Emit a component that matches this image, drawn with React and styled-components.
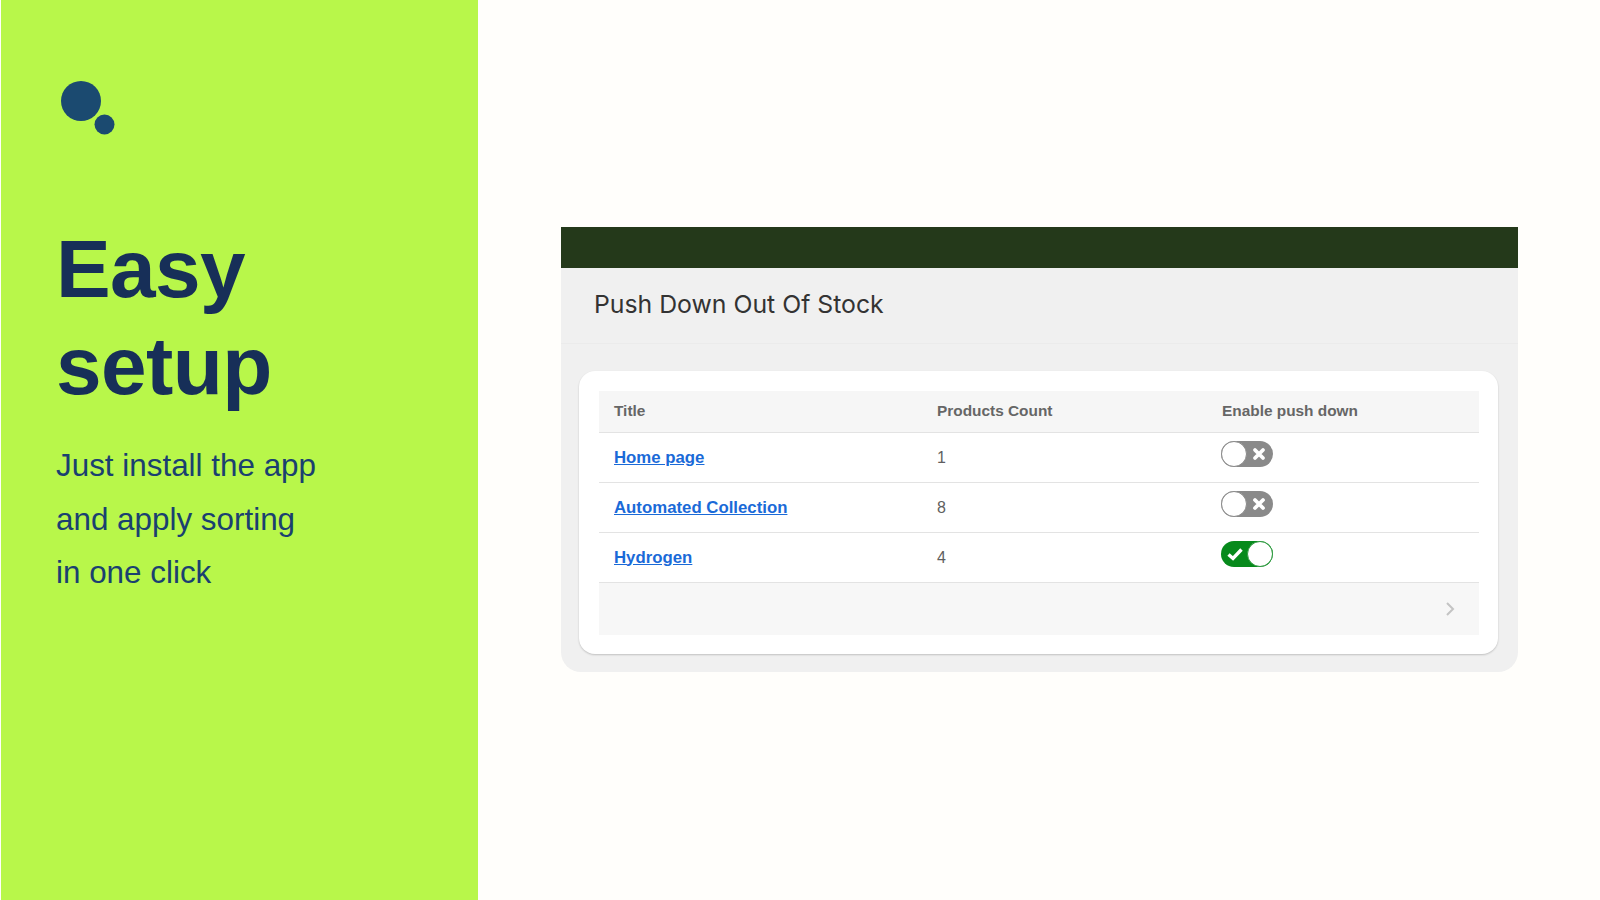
import React from "react";
import styled, { createGlobalStyle } from "styled-components";

const GlobalStyle = createGlobalStyle`
  html, body {
    margin: 0;
    padding: 0;
    background: #fffefb;
    font-family: "Liberation Sans", Arial, sans-serif;
  }
`;

const Page = styled.div`
  display: flex;
  width: 1600px;
  height: 900px;
  overflow: hidden;
  padding-left: 1px;
  box-sizing: border-box;
`;

const Sidebar = styled.aside`
  width: 477px;
  flex: none;
  background: #b8f74a;
  padding: 81px 0 0 55px;
  box-sizing: border-box;
`;

const Logo = styled.svg`
  display: block;
  width: 56px;
  height: 56px;
  margin-left: 4px;
`;

const Heading = styled.h1`
  margin: 83px 0 0;
  font-size: 82px;
  line-height: 97px;
  font-weight: 700;
  letter-spacing: -0.6px;
  color: #172f58;
`;

const Tagline = styled.p`
  margin: 25px 0 0;
  font-size: 31.4px;
  line-height: 53.5px;
  color: #1a4070;
`;

const Main = styled.main`
  flex: 1;
  padding: 227px 0 0 83px;
`;

const Panel = styled.section`
  width: 957px;
  height: 445px;
  background: #f0f0f0;
  border-radius: 0 0 20px 20px;
  overflow: hidden;
`;

const TopBar = styled.div`
  height: 41px;
  background: #24391a;
`;

const PanelHeader = styled.header`
  height: 76px;
  padding-left: 33px;
  display: flex;
  align-items: center;
  border-bottom: 1px solid #ebebeb;
  box-sizing: border-box;
`;

const PanelTitle = styled.h2`
  margin: 0 0 4px;
  font-family: Inter, sans-serif;
  font-size: 24.8px;
  font-weight: 400;
  color: #333;
`;

const Card = styled.div`
  margin: 27px 20px 0 18px;
  height: 283px;
  padding: 20px 19px 0 20px;
  box-sizing: border-box;
  background: #fff;
  border-radius: 16px;
  box-shadow: 0 1px 2px rgba(0, 0, 0, 0.2);
`;

const Row = styled.div`
  display: grid;
  grid-template-columns: 323px 285px 1fr;
  align-items: center;
  height: ${(p) => (p.$head ? "42px" : "50px")};
  padding-left: 15px;
  box-sizing: border-box;
  border-bottom: 1px solid #e3e3e3;
  background: ${(p) => (p.$head ? "#f6f6f6" : "#fff")};
  font-size: 16px;
  color: #5f5f5f;
`;

const HeadCell = styled.span`
  font-size: 15.4px;
  font-weight: 700;
  color: #666;
  margin-bottom: 1px;
`;

const TitleLink = styled.a`
  font-size: 16.8px;
  font-weight: 700;
  color: #1a6ad8;
  text-decoration: underline;
  cursor: pointer;
`;

const Toggle = styled.span`
  width: 52px;
  height: 26px;
  margin: 0 0 8px -1px;
  border-radius: 13px;
  background: ${(p) => (p.$on ? "#078a1c" : "#8a8a8a")};
  display: flex;
  align-items: center;
  justify-content: ${(p) => (p.$on ? "flex-start" : "flex-end")};
  position: relative;
  padding: 0 7px 0 5px;
  box-sizing: border-box;
`;

const Thumb = styled.span`
  position: absolute;
  top: 0;
  ${(p) => (p.$on ? "right: 0;" : "left: 0;")}
  width: 26px;
  height: 26px;
  box-sizing: border-box;
  border-radius: 50%;
  background: #fff;
  border: 1.5px solid ${(p) => (p.$on ? "#2f9a40" : "#8a8a8a")};
`;

const Footer = styled.div`
  height: 52px;
  background: #f7f7f7;
  display: flex;
  align-items: center;
  justify-content: flex-end;
  padding-right: 23px;
`;

const rows = [
  { title: "Home page", count: 1, on: false },
  { title: "Automated Collection", count: 8, on: false },
  { title: "Hydrogen", count: 4, on: true },
];

const App = () => {
  return (
    <Page>
      <GlobalStyle />
      <Sidebar>
        <Logo viewBox="0 0 56 56">
          <circle cx="21" cy="20" r="20" fill="#1b4a70" />
          <circle cx="44.5" cy="43.5" r="10" fill="#1b4a70" />
        </Logo>
        <Heading>
          Easy
          <br />
          setup
        </Heading>
        <Tagline>
          Just install the app
          <br />
          and apply sorting
          <br />
          in one click
        </Tagline>
      </Sidebar>

      <Main>
        <Panel>
          <TopBar />
          <PanelHeader>
            <PanelTitle>Push Down Out Of Stock</PanelTitle>
          </PanelHeader>
          <Card>
            <Row $head>
              <HeadCell>Title</HeadCell>
              <HeadCell>Products Count</HeadCell>
              <HeadCell>Enable push down</HeadCell>
            </Row>
            {rows.map((row) => (
              <Row key={row.title}>
                <span>
                  <TitleLink>{row.title}</TitleLink>
                </span>
                <span>{row.count}</span>
                <Toggle $on={row.on}>
                  {row.on ? (
                    <svg width="18" height="14" viewBox="0 0 18 14">
                      <path d="M2.5 7.5 L7 11.5 L15.5 2.5" fill="none" stroke="#fff" strokeWidth="3.4" />
                    </svg>
                  ) : (
                    <svg width="14" height="14" viewBox="0 0 14 14">
                      <path d="M3 3 L11 11 M11 3 L3 11" fill="none" stroke="#fff" strokeWidth="3.8" strokeLinecap="round" />
                    </svg>
                  )}
                  <Thumb $on={row.on} />
                </Toggle>
              </Row>
            ))}
            <Footer>
              <svg width="12" height="16" viewBox="0 0 12 16">
                <path d="M3 2 L9 8 L3 14" fill="none" stroke="#c4c4c4" strokeWidth="2" />
              </svg>
            </Footer>
          </Card>
        </Panel>
      </Main>
    </Page>
  );
};

export default App;
